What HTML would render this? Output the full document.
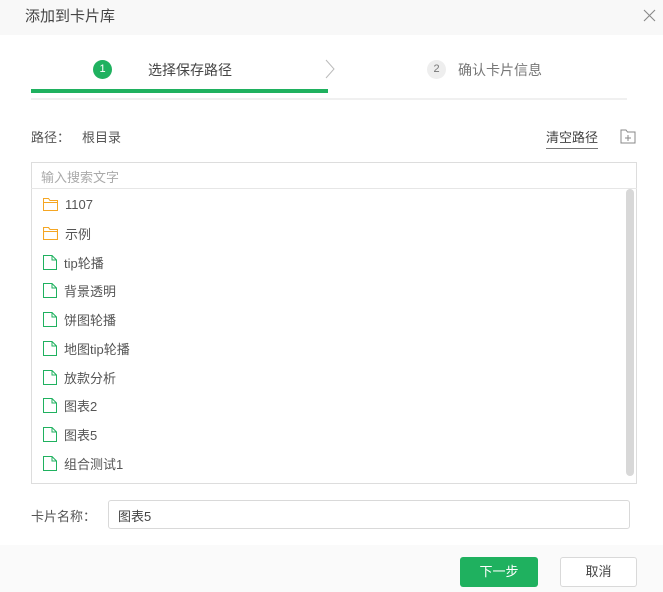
<!DOCTYPE html>
<html><head><meta charset="utf-8"><style>
*{box-sizing:border-box;margin:0;padding:0}
body{width:663px;height:592px;background:#fff;font-family:"Liberation Sans","Noto Sans CJK SC",sans-serif;color:#333;position:relative;overflow:hidden;font-size:13px}
.a{position:absolute}
.hdr{left:0;top:0;width:663px;height:35px;background:#f8f8f8}
.it{position:absolute;left:43px;height:20px;display:flex;align-items:center;color:#555;font-size:13px}
.it svg{margin-right:7px}
</style></head><body>
<div class="a hdr"></div>
<div class="a" style="left:25px;top:5px;font-size:15px;color:#444">添加到卡片库</div>
<svg class="a" style="left:643px;top:9px" width="13" height="13" viewBox="0 0 13 13"><path d="M1 1L12 12M12 1L1 12" stroke="#888" stroke-width="1.1"/></svg>

<div class="a" style="left:93px;top:60px;width:19px;height:19px;border-radius:50%;background:#1fb15f;color:#fff;font-size:11px;text-align:center;line-height:19px">1</div>
<div class="a" style="left:148px;top:60px;font-size:14px;color:#444">选择保存路径</div>
<svg class="a" style="left:324px;top:59px" width="12" height="20"><path d="M2 1L10 10L2 19" fill="none" stroke="#bbb" stroke-width="1"/></svg>
<div class="a" style="left:427px;top:60px;width:19px;height:19px;border-radius:50%;background:#eee;color:#777;font-size:11px;text-align:center;line-height:19px">2</div>
<div class="a" style="left:458px;top:60px;font-size:14px;color:#777">确认卡片信息</div>
<div class="a" style="left:31px;top:98px;width:596px;height:2px;background:#f0f0f0"></div>
<div class="a" style="left:31px;top:89px;width:297px;height:4px;background:#1fb15f"></div>

<div class="a" style="left:31px;top:127px;color:#555">路径：</div>
<div class="a" style="left:82px;top:127px;color:#555">根目录</div>
<div class="a" style="left:546px;top:127px;color:#444;border-bottom:1px solid #777;padding-bottom:2px">清空路径</div>
<svg class="a" style="left:620px;top:129px" width="16" height="15" viewBox="0 0 16 15"><path d="M1 1H6L7.5 3H15V14H1Z" fill="none" stroke="#888"/><path d="M8 6V12M5 9H11" stroke="#888"/></svg>

<div class="a" style="left:31px;top:162px;width:606px;height:322px;border:1px solid #ddd"></div>
<div class="a" style="left:31px;top:188px;width:606px;height:1px;background:#e6e6e6"></div>
<div class="a" style="left:41px;top:167px;color:#aaa">输入搜索文字</div>
<div class="a" style="left:626px;top:189px;width:8px;height:287px;background:#d8d8d8;border-radius:4px"></div>

<div class="it" style="top:194px"><svg width="15" height="13"><path d="M0.5 0.5H5.5L7 2.5H14.5V12.5H0.5Z M0.5 4.5H14.5" fill="none" stroke="#f5a623"/></svg>1107</div>
<div class="it" style="top:223px"><svg width="15" height="13"><path d="M0.5 0.5H5.5L7 2.5H14.5V12.5H0.5Z M0.5 4.5H14.5" fill="none" stroke="#f5a623" stroke-width="1.1"/></svg>示例</div>
<div class="it" style="top:252px"><svg width="14" height="15"><path d="M0.5 0.5H9L13.5 5V14.5H0.5Z M9 0.5V5H13.5" fill="none" stroke="#1fb15f"/></svg>tip轮播</div>
<div class="it" style="top:280px"><svg width="14" height="15"><path d="M0.5 0.5H9L13.5 5V14.5H0.5Z M9 0.5V5H13.5" fill="none" stroke="#1fb15f"/></svg>背景透明</div>
<div class="it" style="top:309px"><svg width="14" height="15"><path d="M0.5 0.5H9L13.5 5V14.5H0.5Z M9 0.5V5H13.5" fill="none" stroke="#1fb15f"/></svg>饼图轮播</div>
<div class="it" style="top:338px"><svg width="14" height="15"><path d="M0.5 0.5H9L13.5 5V14.5H0.5Z M9 0.5V5H13.5" fill="none" stroke="#1fb15f"/></svg>地图tip轮播</div>
<div class="it" style="top:367px"><svg width="14" height="15"><path d="M0.5 0.5H9L13.5 5V14.5H0.5Z M9 0.5V5H13.5" fill="none" stroke="#1fb15f"/></svg>放款分析</div>
<div class="it" style="top:395px"><svg width="14" height="15"><path d="M0.5 0.5H9L13.5 5V14.5H0.5Z M9 0.5V5H13.5" fill="none" stroke="#1fb15f"/></svg>图表2</div>
<div class="it" style="top:424px"><svg width="14" height="15"><path d="M0.5 0.5H9L13.5 5V14.5H0.5Z M9 0.5V5H13.5" fill="none" stroke="#1fb15f"/></svg>图表5</div>
<div class="it" style="top:453px"><svg width="14" height="15"><path d="M0.5 0.5H9L13.5 5V14.5H0.5Z M9 0.5V5H13.5" fill="none" stroke="#1fb15f"/></svg>组合测试1</div>

<div class="a" style="left:31px;top:506px;color:#555">卡片名称：</div>
<div class="a" style="left:108px;top:500px;width:522px;height:29px;border:1px solid #d9d9d9;border-radius:3px;padding:5px 0 0 9px;color:#444">图表5</div>

<div class="a" style="left:0;top:545px;width:663px;height:47px;background:#fafafa"></div>
<div class="a" style="left:460px;top:557px;width:78px;height:30px;background:#1fb15f;border-radius:3px;color:#fff;text-align:center;line-height:30px">下一步</div>
<div class="a" style="left:560px;top:557px;width:77px;height:30px;background:#fff;border:1px solid #d9d9d9;border-radius:3px;color:#444;text-align:center;line-height:28px">取消</div>
</body></html>
